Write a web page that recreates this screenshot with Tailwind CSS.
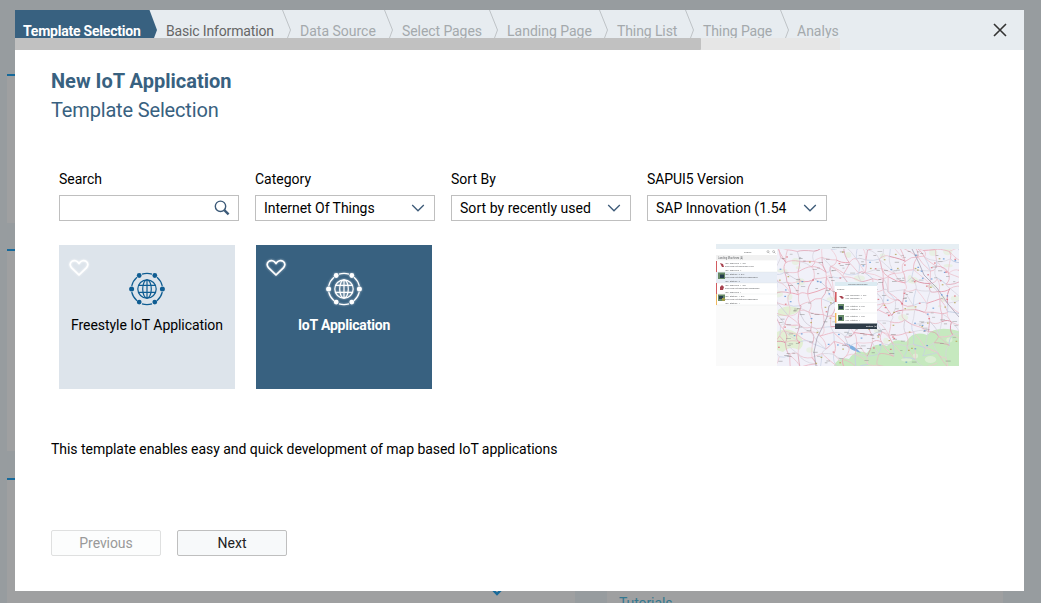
<!DOCTYPE html>
<html lang="en">
<head>
<meta charset="utf-8">
<title>New IoT Application</title>
<script src="https://cdn.jsdelivr.net/npm/@tailwindcss/browser@4"></script>
</head>
<body class="relative h-[603px] w-[1041px] overflow-hidden bg-[#979c9f] font-['Roboto','Liberation_Sans',sans-serif] text-sm text-black">

<!-- Dimmed start page behind the dialog -->
<div class="flex h-[603px] gap-8 overflow-hidden pl-[7px]">
  <div class="flex w-[568px] flex-col pt-[74px]">
    <div class="h-[149px] shrink-0 border-t-2 border-[#16699a] bg-[#9fa0a1]"></div>
    <div class="mt-[26px] h-[202px] shrink-0 border-t-2 border-[#16699a] bg-[#9fa0a1]"></div>
    <div class="mt-[27px] flex h-[125px] shrink-0 items-end border-t-2 border-[#16699a] bg-[#9fa0a1] pl-[485px]">
      <svg class="mb-[7px] h-[6px] w-[10px]" viewBox="0 0 10 6"><path d="M1 0L5 4L9 0" fill="none" stroke="#16699a" stroke-width="2.4"/></svg>
    </div>
  </div>
  <div class="mt-[478px] w-[396px] bg-[#9fa0a1] pt-[116px] pl-3 leading-[18px] text-[#347890]"><span class="tracking-[-0.1px]">Tutorials</span></div>
</div>

<main class="absolute left-[15px] top-[10px] flex h-[581px] w-[1009px] flex-col bg-white">
  <header class="flex h-10 shrink-0 bg-[#e7ecf0]">
    <div class="w-[825px] overflow-hidden">
      <nav class="flex h-7 w-[900px] overflow-hidden whitespace-nowrap leading-[42px] text-[#a4a9ac]">
        <div class="w-[142px] shrink-0 bg-[#386180] pl-2 font-bold text-white [clip-path:polygon(0_0,134.5px_0,142px_20px,139px_100%,0_100%)]"><span class="tracking-[-0.22px]">Template Selection</span></div>
        <div class="flex w-[134px] shrink-0 justify-between pl-[9px] text-[#666]"><span class="tracking-[-0.16px]">Basic Information</span><svg class="h-7 w-[9px] shrink-0" viewBox="0 0 9 28"><path d="M.5 0L8.5 20L5.5 28" fill="none" stroke="#bfc3c6"/></svg></div>
        <div class="flex w-[102px] shrink-0 justify-between pl-[9px]"><span>Data Source</span><svg class="h-7 w-[9px] shrink-0" viewBox="0 0 9 28"><path d="M.5 0L8.5 20L5.5 28" fill="none" stroke="#bfc3c6"/></svg></div>
        <div class="flex w-[105px] shrink-0 justify-between pl-[9px]"><span class="tracking-[-0.08px]">Select Pages</span><svg class="h-7 w-[9px] shrink-0" viewBox="0 0 9 28"><path d="M.5 0L8.5 20L5.5 28" fill="none" stroke="#bfc3c6"/></svg></div>
        <div class="flex w-[110px] shrink-0 justify-between pl-[9px]"><span>Landing Page</span><svg class="h-7 w-[9px] shrink-0" viewBox="0 0 9 28"><path d="M.5 0L8.5 20L5.5 28" fill="none" stroke="#bfc3c6"/></svg></div>
        <div class="flex w-[86px] shrink-0 justify-between pl-[9px]"><span class="tracking-[-0.1px]">Thing List</span><svg class="h-7 w-[9px] shrink-0" viewBox="0 0 9 28"><path d="M.5 0L8.5 20L5.5 28" fill="none" stroke="#bfc3c6"/></svg></div>
        <div class="flex w-[95px] shrink-0 justify-between pl-[9px]"><span class="tracking-[-0.1px]">Thing Page</span><svg class="h-7 w-[9px] shrink-0" viewBox="0 0 9 28"><path d="M.5 0L8.5 20L5.5 28" fill="none" stroke="#bfc3c6"/></svg></div>
        <div class="shrink-0 pl-[8px]"><span>Analys</span></div>
      </nav>
      <div class="h-3 bg-[#e6e6e6]"><div class="h-3 w-[686px] rounded-r-[1px] bg-[#c1c1c1]"></div></div>
    </div>
    <div class="flex flex-1 items-center justify-end pr-[17px]">
      <svg class="h-[14px] w-[14px]" viewBox="0 0 14 14"><path d="M1 1L13 13M13 1L1 13" stroke="#333" stroke-width="1.6"/></svg>
    </div>
  </header>

  <section class="flex flex-1 flex-col px-9">
    <h1 class="mt-[17px] h-[28px] text-xl leading-[28px] font-bold text-[#386180]"><span>New IoT Application</span></h1>
    <h2 class="h-[30px] text-xl leading-[30px] text-[#386180]"><span class="tracking-[-0.16px]">Template Selection</span></h2>

    <div class="mt-[44px] flex gap-4 pl-2">
      <label class="flex w-[180px] flex-col gap-[6px] leading-5"><span>Search</span>
        <span class="flex h-[26px] items-center justify-end border border-[#bfbfbf] pr-[8px]">
          <svg class="h-4 w-4" viewBox="0 0 16 16"><circle cx="6.5" cy="6.3" r="5.2" fill="none" stroke="#3c5a78" stroke-width="1.4"/><path d="M10.3 10.2L14.6 14.4" stroke="#3c5a78" stroke-width="2.4"/></svg>
        </span></label>
      <label class="flex w-[180px] flex-col gap-[6px] leading-5"><span>Category</span>
        <span class="flex h-[26px] items-center justify-between border border-[#bfbfbf] pr-[9px] pl-2"><span class="tracking-[-0.05px]">Internet Of Things</span>
          <svg class="h-2 w-[14px]" viewBox="0 0 14 8"><path d="M1.2 1L7 6.8L12.8 1" fill="none" stroke="#3c5a78" stroke-width="1.3"/></svg></span></label>
      <label class="flex w-[180px] flex-col gap-[6px] leading-5"><span>Sort By</span>
        <span class="flex h-[26px] items-center justify-between border border-[#bfbfbf] pr-[9px] pl-2"><span class="tracking-[0.04px]">Sort by recently used</span>
          <svg class="h-2 w-[14px]" viewBox="0 0 14 8"><path d="M1.2 1L7 6.8L12.8 1" fill="none" stroke="#3c5a78" stroke-width="1.3"/></svg></span></label>
      <label class="flex w-[180px] flex-col gap-[6px] leading-5"><span class="tracking-[-0.06px]">SAPUI5 Version</span>
        <span class="flex h-[26px] items-center justify-between border border-[#bfbfbf] pr-[9px] pl-2"><span>SAP Innovation (1.54</span>
          <svg class="h-2 w-[14px]" viewBox="0 0 14 8"><path d="M1.2 1L7 6.8L12.8 1" fill="none" stroke="#3c5a78" stroke-width="1.3"/></svg></span></label>
    </div>

    <svg class="hidden">
      <symbol id="heart" viewBox="0 0 20 18"><path d="M10 16L2.4 8.6C.6 6.500.8 3.800 2.800 2.400C5 .9 8 1.400 10 4.500C12 1.400 15 .9 17.200 2.400C19.200 3.800 19.400 6.500 17.600 8.600Z" fill="none" stroke="currentColor" stroke-width="1.7" stroke-linejoin="round"/></symbol>
      <symbol id="globe" viewBox="0 0 36 34">
        <g fill="none" stroke="currentColor" stroke-width="1.2">
          <circle cx="18" cy="17" r="9.2"/><ellipse cx="18" cy="17" rx="4.3" ry="9.2"/><path d="M18 7.8V26.2M9.6 13.4H26.4M9.6 20.4H26.4"/>
          <path d="M13 2.1Q18 .6 23 2.1M13 31.900Q18 33.400 23 31.900M8 5.300Q3.800 9 2.700 14M28 5.300Q32.200 9 33.300 14M8 28.700Q3.800 25 2.700 20M28 28.700Q32.200 25 33.300 20"/>
        </g>
        <g fill="currentColor"><circle cx="10.2" cy="3.5" r="2.4"/><circle cx="25.8" cy="3.5" r="2.4"/><circle cx="2.6" cy="17" r="2.5"/><circle cx="33.4" cy="17" r="2.5"/><circle cx="10.2" cy="30.1" r="2.4"/><circle cx="25.8" cy="30.1" r="2.4"/></g>
      </symbol>
    </svg>

    <div class="mt-6 flex gap-[21px] pl-2">
      <div class="flex h-[144px] w-[176px] flex-col items-center bg-[#dde4eb]">
        <svg class="mt-[14px] ml-[10px] h-[18px] w-5 self-start text-white drop-shadow-[0_0_1px_rgba(255,255,255,.8)]"><use href="#heart"/></svg>
        <svg class="-mt-[5px] h-[34px] w-9 text-[#0f5d92]"><use href="#globe"/></svg>
        <div class="mt-[9px] leading-5"><span class="tracking-[-0.06px]">Freestyle IoT Application</span></div>
      </div>
      <div class="flex h-[144px] w-[176px] flex-col items-center bg-[#386180] text-white">
        <svg class="mt-[14px] ml-[10px] h-[18px] w-5 self-start drop-shadow-[0_0_1px_rgba(255,255,255,.6)]"><use href="#heart"/></svg>
        <svg class="-mt-[5px] h-[34px] w-9 drop-shadow-[0_0_1px_rgba(255,255,255,.6)]"><use href="#globe"/></svg>
        <div class="mt-[9px] font-bold leading-5"><span class="tracking-[-0.2px]">IoT Application</span></div>
      </div>
      <svg class="-mt-px ml-[263px] h-[122px] w-[243px]" viewBox="0 0 243 122" font-family="Roboto, sans-serif">
        <filter id="soft" x="0" y="0" width="1" height="1"><feGaussianBlur stdDeviation=".45"/></filter>
        <filter id="thumb" x="0" y="0" width="1" height="1"><feGaussianBlur stdDeviation=".3"/></filter>
        <rect width="243" height="122" fill="#f1f1f9"/>
        <g filter="url(#soft)"><g id="terrain"></g><g id="roads" fill="none"></g><g id="places"></g></g>
        <rect width="61" height="122" fill="#fafafa"/>
        <rect width="243" height="5" fill="#e6eef3"/>
        <rect y="5" width="61" height="6" fill="#fff"/><rect y="11" width="61" height="5" fill="#f1f1f1"/>
        <rect y="17" width="61" height="44" fill="#fff"/><rect y="28" width="61" height="11" fill="#e7edf6"/>
        <rect x="119" y="38" width="42" height="47" fill="#fff"/><rect x="119" y="38" width="42" height="4" fill="#dcebf2"/>
        <rect x="119" y="79.5" width="42" height="5.5" fill="#2f3c48"/>
        <g filter="url(#thumb)">
        <path d="M0 28H61M0 39H61M0 50H61M0 61H61M119 58.5H161M119 69H161" stroke="#e0e2e4" stroke-width=".4"/>
        <path d="M0 17h1v11H0zM0 39h1v11H0zM119 48h1.600v10H119z" fill="#d35b60"/><path d="M0 50h1v11H0zM119 69h1.400v10H119z" fill="#efb95e"/>
        <path d="M4 19l3 1 1 3-2 0zM4 43l2-2 2 2-1 3H4zM123 52l3 0 2 2-2 1z" fill="#a84350"/>
        <path d="M2 28.500h7v6.500H2zM2 50.500h7v6.500H2zM122 60h6v6h-6zM122 71h6v6h-6z" fill="#668a66"/>
        <path d="M4 30.500h4v3.500H4zM3 52h4v3H3zM123 62h4v3h-4zM123 73h3v3h-3z" fill="#263e4d"/><path d="M6 54h3v3H6z" fill="#a19b49"/>
        <g fill="#66686b" font-size="2.4">
          <text x="116" y="3.5">Landing Page</text><text x="28" y="9">Search</text><text x="2" y="14.6" font-size="2.6">Landing Machines (4)</text>
          <text x="9" y="20">IOT_Machine_4_SW</text><text x="9" y="23.4">com.sap.iot.machines.core</text><text x="9" y="26.8">IOT_Machine_4</text>
          <text x="9" y="31">IOT_Station_2_SW</text><text x="9" y="34.4">com.sap.iot.stations.packages</text><text x="9" y="37.8">IOT_Station_2</text>
          <text x="9" y="42">IOT_Machine_1_SW</text><text x="9" y="45.4">com.sap.iot.machines.packages</text><text x="9" y="48.8">IOT_Machine_1</text>
          <text x="9" y="53">IOT_Station_1_SW</text><text x="9" y="56.4">com.sap.iot.stations.packages</text><text x="9" y="59.8">IOT_Station_1</text>
          <text x="132" y="41">Landing Machines</text><text x="121" y="46.4">Search</text>
          <text x="129.5" y="52">IOT_Machine_4_SW</text><text x="129.5" y="55.4">IOT_Machine_4</text>
          <text x="129.5" y="63">IOT_Station_2_SW</text><text x="129.5" y="66">IOT_Station_2</text>
          <text x="129.5" y="73.4">IOT_Station_1_SW</text><text x="129.5" y="76.6">IOT_Station_1</text><text x="150" y="83" fill="#fff">Details (3)</text>
        </g>
        <g fill="none" stroke="#888" stroke-width=".5"><circle cx="52" cy="7.6" r="1"/><circle cx="57.6" cy="7.6" r="1"/><path d="M58 8l1.500 1.500M52.600 8.400l1 1"/></g>
        </g>
      </svg>
    </div>

    <p class="mt-[50px] leading-5"><span class="tracking-[-0.04px]">This template enables easy and quick development of map based IoT applications</span></p>

    <div class="mt-[71px] flex gap-4">
      <button class="h-[26px] w-[110px] rounded-[2px] border border-[#dfe0e0] bg-[#fcfdfd] text-[#999]"><span class="tracking-[-0.08px]">Previous</span></button>
      <button class="h-[26px] w-[110px] rounded-[2px] border border-[#bfbfbf] bg-[#f7f9fa] text-[#222]"><span>Next</span></button>
    </div>
  </section>
</main>

<script>
// Builds the road map thumbnail: woods, a road network and place labels.
let seed = 41;
const rnd = () => (seed = (seed * 16807) % 2147483647) / 2147483647;
const span = (a, b) => a + rnd() * (b - a);
let t = '<path d="M118 122Q122 112 133 115Q140 104 151 109Q158 97 171 102Q179 93 190 98Q197 86 211 91Q220 81 243 87V122Z" fill="#c6e9bf"/>';
t += '<path d="M61 88Q72 82 83 91Q91 99 83 106Q74 101 67 108L61 106ZM62 66Q72 59 85 65Q78 73 62 72Z" fill="#e2efd4"/>';
for (let i = 0; i < 32; i++) t += `<ellipse cx="${span(61,243)}" cy="${span(6,118)}" rx="${span(2,6)}" ry="${span(1,4)}" fill="#e4f0dc" opacity=".7"/>`;
t += '<path d="M128 99Q137 100 145 109L139 107Q133 105 128 99" fill="#7fb0e0"/>';
document.getElementById('terrain').innerHTML = t;
// Roads join neighbouring towns on a jittered grid, thinning out in the woods.
let r = '';
const cols = ['#e9a9b8', '#eab9c4', '#dd9aab', '#d5d2dd', '#c6d0e4', '#efc6d0'];
const town = [];
for (let j = 0; j < 12; j++) { town.push([]); for (let i = 0; i < 17; i++) town[j].push([61 + i * 11.5 + span(-4, 4), 4 + j * 10.8 + span(-4, 4)]); }
const road = (a, b, n) => {
  if (a[1] > 150 - a[0] * .22 && rnd() < .6) return;
  r += `<path d="M${a}Q${(a[0]+b[0])/2+span(-4,4)} ${(a[1]+b[1])/2+span(-4,4)} ${b}" stroke="${cols[n % 6]}" stroke-width="${n % 5 ? .7 : 1}"/>`;
};
for (let j = 0; j < 12; j++) for (let i = 0; i < 17; i++) {
  const n = Math.floor(span(0, 60));
  if (i < 16) road(town[j][i], town[j][i+1], n);
  if (j < 11) road(town[j][i], town[j+1][i], n + 1);
  if (i < 16 && j < 11 && n % 2) road(town[j][i], town[j+1][i+1], n + 2);
}
r += '<path d="M124 44L121 56L113 62L111 73L106 84L101 94L98 108L100 122M196 5L203 19L208 31L221 44L232 60L243 73" stroke="#a8a2b2" stroke-width=".8"/>';
document.getElementById('roads').innerHTML = r;
let p = '';
const dots = ['#5b93d6', '#dd6673', '#b5a455', '#777', '#888', '#78726f'];
for (let i = 0; i < 290; i++) {
  const k = i % 7 < 3 ? i % 3 : 3 + i % 3;
  const x = span(62,240), y = span(7,119);
  if (y > 150 - x * .22 && i % 3) continue;
  p += `<rect x="${x}" y="${y}" width="${k < 3 ? 1.7 : span(2,5)}" height="${k < 3 ? 1.2 : .7}" fill="${dots[k]}" opacity="${k < 3 ? .8 : .6}"/>`;
}
document.getElementById('places').innerHTML = p;
</script>
</body>
</html>
